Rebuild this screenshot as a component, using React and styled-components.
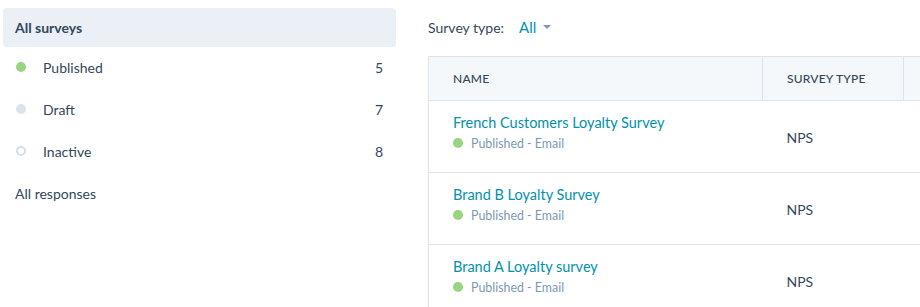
import React from "react";
import styled, { createGlobalStyle } from "styled-components";

const Global = createGlobalStyle`
  html, body { margin: 0; padding: 0; background: #fff; overflow: hidden; }
  body { font-family: Lato, "Open Sans", sans-serif; color: #33475b; -webkit-font-smoothing: antialiased; }
  * { box-sizing: border-box; }
`;

const Page = styled.div`
  display: flex;
  width: 920px;
  height: 307px;
  overflow: hidden;
`;

const Sidebar = styled.nav`
  flex: 0 0 396px;
  padding: 8px 0 0 3px;
  display: flex;
  flex-direction: column;
`;

const NavItem = styled.div`
  display: flex;
  align-items: center;
  height: ${(p) => (p.$active ? "39px" : "42px")};
  padding: 0 ${(p) => (p.$active ? "12px" : "13px")} ${(p) => (p.$active ? "0" : "2px")} 12px;
  border-radius: 4px;
  background: ${(p) => (p.$active ? "#eaf0f6" : "transparent")};
  font-size: 14px;
  font-weight: ${(p) => (p.$active ? 700 : 400)};
  color: #33475b;
`;

const Dot = styled.span`
  width: 10px;
  height: 10px;
  border-radius: 50%;
  margin: 0 17px 0 1px;
  flex: 0 0 auto;
  background: ${(p) => p.$fill};
  border: ${(p) => (p.$ring ? "2px solid #d6dee8" : "none")};
`;

const Label = styled.span`
  flex: 1;
`;

const Count = styled.span`
  margin-right: 0;
`;

const Main = styled.main`
  flex: 1;
  padding-left: 32px;
  overflow: hidden;
`;

const Filter = styled.div`
  display: flex;
  align-items: center;
  height: 56px;
  padding-bottom: 2px;
  font-size: 14px;
`;

const FilterLabel = styled.span`
  color: #33475b;
  margin-right: 15px;
`;

const FilterValue = styled.span`
  color: #0091ae;
  display: inline-flex;
  align-items: center;
  gap: 7px;
  font-size: 15px;
`;

const Caret = styled.span`
  width: 0;
  height: 0;
  border-left: 4px solid transparent;
  border-right: 4px solid transparent;
  border-top: 4px solid #7c98b6;
`;

const Table = styled.table`
  border-collapse: collapse;
  width: 640px;
  table-layout: fixed;
`;

const Th = styled.th`
  height: 44px;
  background: #f5f8fa;
  border: 1px solid #dfe3eb;
  text-align: left;
  padding: 0 0 0 24px;
  font-size: 12px;
  font-weight: 500;
  letter-spacing: 0.2px;
  color: #33475b;
  text-transform: uppercase;
`;

const Td = styled.td`
  height: 72px;
  border-left: 1px solid #dfe3eb;
  border-bottom: 1px solid #dfe3eb;
  padding: 0 0 9px 24px;
  font-size: 14px;
  color: #33475b;
  vertical-align: middle;
`;

const TypeCell = styled(Td)`
  border-left: none;
  padding: 2px 0 0 24px;
`;

const Title = styled.a`
  display: block;
  color: #0091ae;
  font-size: 14.5px;
  text-decoration: none;
  margin-bottom: 5px;
`;

const Status = styled.div`
  display: flex;
  align-items: center;
  font-size: 12.4px;
  color: #7c98b6;
`;

const SmallDot = styled.span`
  width: 10px;
  height: 10px;
  border-radius: 50%;
  background: #99d47f;
  margin-right: 8px;
`;

const nav = [
  { label: "Published", count: 5, fill: "#99d47f" },
  { label: "Draft", count: 7, fill: "#dbe2ea" },
  { label: "Inactive", count: 8, fill: "transparent", ring: true },
];

const rows = [
  "French Customers Loyalty Survey",
  "Brand B Loyalty Survey",
  "Brand A Loyalty survey",
];

export default function App() {
  return (
    <Page>
      <Global />
      <Sidebar>
        <NavItem $active>All surveys</NavItem>
        {nav.map((n) => (
          <NavItem key={n.label}>
            <Dot $fill={n.fill} $ring={n.ring} />
            <Label>{n.label}</Label>
            <Count>{n.count}</Count>
          </NavItem>
        ))}
        <NavItem>All responses</NavItem>
      </Sidebar>
      <Main>
        <Filter>
          <FilterLabel>Survey type:</FilterLabel>
          <FilterValue>
            All <Caret />
          </FilterValue>
        </Filter>
        <Table>
          <colgroup>
            <col style={{ width: 334 }} />
            <col style={{ width: 141 }} />
            <col />
          </colgroup>
          <thead>
            <tr>
              <Th>Name</Th>
              <Th>Survey type</Th>
              <Th />
            </tr>
          </thead>
          <tbody>
            {rows.map((r) => (
              <tr key={r}>
                <Td>
                  <Title href="#">{r}</Title>
                  <Status>
                    <SmallDot />
                    Published - Email
                  </Status>
                </Td>
                <TypeCell>NPS</TypeCell>
                <TypeCell />
              </tr>
            ))}
          </tbody>
        </Table>
      </Main>
    </Page>
  );
}
